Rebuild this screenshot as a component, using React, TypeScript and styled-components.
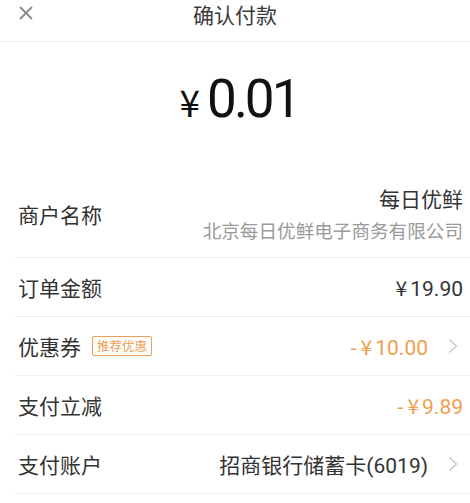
import React from "react";
import styled, { createGlobalStyle } from "styled-components";

const GlobalStyle = createGlobalStyle`
  html, body {
    margin: 0;
    padding: 0;
    background: #ffffff;
  }
  body {
    font-family: "Roboto", "Noto Sans CJK SC", sans-serif;
    color: #333333;
  }
`;

const Page = styled.div`
  width: 470px;
  height: 503px;
  overflow: hidden;
  background: #ffffff;
`;

const Header = styled.div`
  display: grid;
  grid-template-columns: 1fr auto 1fr;
  align-items: center;
  height: 41px;
  border-bottom: 1px solid #efefef;
  box-sizing: content-box;
`;

const CloseButton = styled.div`
  display: flex;
  align-items: center;
  padding-left: 18px;
  margin-top: -16px;
`;

const Title = styled.div`
  font-family: "Noto Sans CJK SC", sans-serif;
  font-size: 21px;
  color: #3a3a3a;
  margin-top: -14px;
`;

const AmountBlock = styled.div`
  display: flex;
  justify-content: center;
  align-items: baseline;
  height: 129px;
  box-sizing: border-box;
`;

const AmountInner = styled.div`
  display: flex;
  align-items: baseline;
  margin-top: 26px;
  margin-left: 8px;
`;

const Currency = styled.span`
  font-family: "Noto Sans CJK SC", sans-serif;
  font-size: 37px;
  color: #111111;
  margin-right: 7px;
`;

const Digits = styled.span`
  font-family: "Roboto", sans-serif;
  font-size: 53px;
  letter-spacing: -3px;
  color: #111111;
`;

const List = styled.div`
  margin-left: 14px;
`;

const Row = styled.div<{ $tall?: boolean }>`
  display: flex;
  align-items: center;
  justify-content: space-between;
  height: ${(p) => (p.$tall ? "86px" : "58px")};
  padding-right: 7px;
  border-bottom: 1px solid #efefef;
`;

const LabelGroup = styled.div`
  display: flex;
  align-items: center;
  gap: 11px;
  padding-left: 4px;
`;

const Label = styled.span`
  font-family: "Noto Sans CJK SC", sans-serif;
  font-size: 21px;
  color: #333333;
`;

const Badge = styled.span`
  font-family: "Noto Sans CJK SC", sans-serif;
  font-size: 12.5px;
  line-height: 18px;
  color: #eba055;
  border: 1px solid #eba055;
  border-radius: 2px;
  padding: 0 4px;
`;

const ValueGroup = styled.div`
  display: flex;
  align-items: center;
  gap: 20px;
  padding-right: 5px;
`;

const Value = styled.span<{ $orange?: boolean }>`
  display: inline-flex;
  align-items: baseline;
  font-family: "Roboto", "Noto Sans CJK SC", sans-serif;
  font-size: 21px;
  color: ${(p) => (p.$orange ? "#f0a04b" : "#333333")};
`;

const Minus = styled.span`
  margin-right: 4px;
`;

const Yen = styled.span`
  font-family: "Noto Sans CJK SC", sans-serif;
  margin-right: 3px;
`;

const MerchantInfo = styled.div`
  display: flex;
  flex-direction: column;
  align-items: flex-end;
  gap: 3px;
  margin-top: -3px;
`;

const MerchantName = styled.span`
  font-family: "Noto Sans CJK SC", sans-serif;
  font-size: 21px;
  color: #333333;
`;

const Company = styled.span`
  font-family: "Noto Sans CJK SC", sans-serif;
  font-size: 18.6px;
  color: #9a9a9a;
`;

const Close = () => (
  <svg width="16" height="14" viewBox="0 0 16 14">
    <path d="M2 1 L14 13 M14 1 L2 13" stroke="#8a8a8a" strokeWidth="1.8" fill="none" />
  </svg>
);

const Chevron = () => (
  <svg width="10" height="16" viewBox="0 0 10 16">
    <path d="M1.5 1.5 L8.5 8 L1.5 14.5" stroke="#c6c6c6" strokeWidth="1.3" fill="none" />
  </svg>
);

const Money = ({ amount, minus, orange }: { amount: string; minus?: boolean; orange?: boolean }) => (
  <Value $orange={orange}>
    {minus && <Minus>-</Minus>}
    <Yen>¥</Yen>
    {amount}
  </Value>
);

export default function App() {
  return (
    <Page>
      <GlobalStyle />
      <Header>
        <CloseButton>
          <Close />
        </CloseButton>
        <Title>确认付款</Title>
        <div />
      </Header>
      <AmountBlock>
        <AmountInner>
          <Currency>¥</Currency>
          <Digits>0.01</Digits>
        </AmountInner>
      </AmountBlock>
      <List>
        <Row $tall>
          <LabelGroup>
            <Label>商户名称</Label>
          </LabelGroup>
          <MerchantInfo>
            <MerchantName>每日优鲜</MerchantName>
            <Company>北京每日优鲜电子商务有限公司</Company>
          </MerchantInfo>
        </Row>
        <Row>
          <LabelGroup>
            <Label>订单金额</Label>
          </LabelGroup>
          <Money amount="19.90" />
        </Row>
        <Row>
          <LabelGroup>
            <Label>优惠券</Label>
            <Badge>推荐优惠</Badge>
          </LabelGroup>
          <ValueGroup>
            <Money amount="10.00" minus orange />
            <Chevron />
          </ValueGroup>
        </Row>
        <Row>
          <LabelGroup>
            <Label>支付立减</Label>
          </LabelGroup>
          <Money amount="9.89" minus orange />
        </Row>
        <Row>
          <LabelGroup>
            <Label>支付账户</Label>
          </LabelGroup>
          <ValueGroup>
            <Value>招商银行储蓄卡(6019)</Value>
            <Chevron />
          </ValueGroup>
        </Row>
      </List>
    </Page>
  );
}
